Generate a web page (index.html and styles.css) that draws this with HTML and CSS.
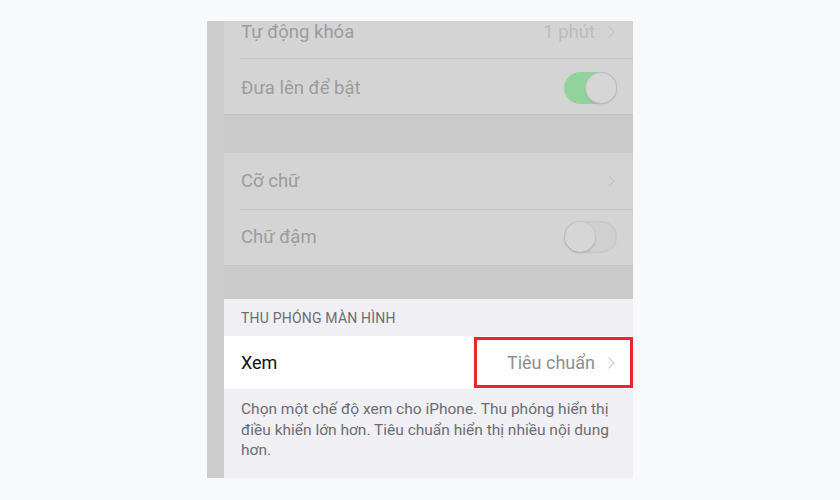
FILE: index.html
```html
<html lang="vi">
<head>
  <meta charset="UTF-8">
  <meta name="viewport" content="width=device-width, initial-scale=1.0">
  <title>Màn hình &amp; Độ sáng</title>
  <link rel="stylesheet" href="styles.css">
</head>
<body>
  <div class="shot">
    <div class="edge"></div>

    <div class="panel">
      <!-- dimmed part of the settings list -->
      <ul class="group dim first">
        <li class="row">
          <span class="label">Tự động khóa</span>
          <span class="value">1 phút <i class="chev"></i></span>
        </li>
        <li class="row">
          <span class="label">Đưa lên để bật</span>
          <span class="switch on"></span>
        </li>
      </ul>

      <div class="gap"></div>

      <ul class="group dim">
        <li class="row">
          <span class="label">Cỡ chữ</span>
          <span class="value"><i class="chev"></i></span>
        </li>
        <li class="row">
          <span class="label">Chữ đậm</span>
          <span class="switch"></span>
        </li>
      </ul>

      <div class="gap short"></div>

      <!-- display zoom -->
      <div class="zoom">
        <div class="head">THU PHÓNG MÀN HÌNH</div>
        <div class="row light">
          <span class="label">Xem</span>
          <span class="value mark">Tiêu chuẩn <i class="chev"></i></span>
        </div>
        <p class="foot">Chọn một chế độ xem cho iPhone. Thu phóng hiển thị điều khiển lớn hơn. Tiêu chuẩn hiển thị nhiều nội dung hơn.</p>
      </div>
    </div>
  </div>
</body>
</html>
```

FILE: styles.css
```css
body{
  margin: 0;
  background: #f8f9fb;
  font-family: 'Roboto', 'Liberation Sans', sans-serif;
}
.shot{
  display: flex;
  width: 426px;
  height: 457px;
  margin: 21px 0 0 207px;
  overflow: hidden;
}
.edge{
  width: 17px;
  background: #cdcdcd;
}
.panel{
  flex: 1;
  display: flex;
  flex-direction: column;
  overflow: hidden;
}
.group{
  list-style: none;
  margin: 0;
  padding: 0;
}
.group.first{
  margin-top: -19px;
}
.group.first .row{
  padding-top: 4px;
}
.row{
  position: relative;
  display: flex;
  align-items: center;
  justify-content: space-between;
  box-sizing: border-box;
  height: 56px;
  padding: 0 16px 0 17px;
  font-size: 18.5px;
}
.dim{
  background: #d4d4d4;
  color: #9c9c9c;
}
/* inset hairline between rows */
.dim .row + .row::before{
  content: "";
  position: absolute;
  top: 0;
  left: 16px;
  right: 0;
  height: 1px;
  background: #c6c6c6;
}
.dim .value{
  color: #bdbdbd;
}
.gap{
  height: 38px;
  background: #cbcbcb;
  border-top: 1px solid #c4c4c4;
}
.gap.short{
  height: 33px;
}
.value{
  display: flex;
  align-items: center;
  gap: 10px;
  color: #8e8e93;
}
.chev{
  width: 7px;
  height: 7px;
  border-right: 1.5px solid currentColor;
  border-top: 1.5px solid currentColor;
  transform: rotate(45deg);
  margin-right: 4px;
}
.dim .chev{
  color: #c2c2c2;
}
.switch{
  position: relative;
  width: 53px;
  height: 32px;
  border-radius: 16px;
  background: #d0d0d0;
  box-shadow: inset 0 0 0 1.5px #c7c7c7;
}
.switch::after{
  content: "";
  position: absolute;
  top: 1px;
  left: 1px;
  width: 30px;
  height: 30px;
  border-radius: 50%;
  background: #d6d6d6;
  box-shadow: 0 1px 3px rgba(0,0,0,0.18);
}
.switch.on{
  background: #92d29b;
  box-shadow: none;
}
.switch.on::after{
  left: 22px;
  box-shadow: 0 0 0 1px #bdbdbd, 0 1px 3px rgba(0,0,0,0.15);
}
.zoom{
  flex: 1;
  background: #efeff4;
}
.head{
  height: 37px;
  padding: 0 17px;
  display: flex;
  align-items: center;
  font-size: 14px;
  color: #6d6d72;
  letter-spacing: 0.2px;
}
.light{
  background: #fff;
  color: #111;
  height: 53px;
  font-size: 18px;
}
.light .value{
  color: #8e8e93;
}
.light .chev{
  color: #c7c7cc;
}
.mark{
  position: relative;
}
.mark::before{
  content: "";
  position: absolute;
  left: -33px;
  right: -16px;
  top: -15px;
  bottom: -15px;
  border: 3px solid #e8262c;
}
.foot{
  margin: 0;
  padding: 10px 20px 0 17px;
  font-size: 15.5px;
  line-height: 20.5px;
  color: #6d6d72;
}
```
